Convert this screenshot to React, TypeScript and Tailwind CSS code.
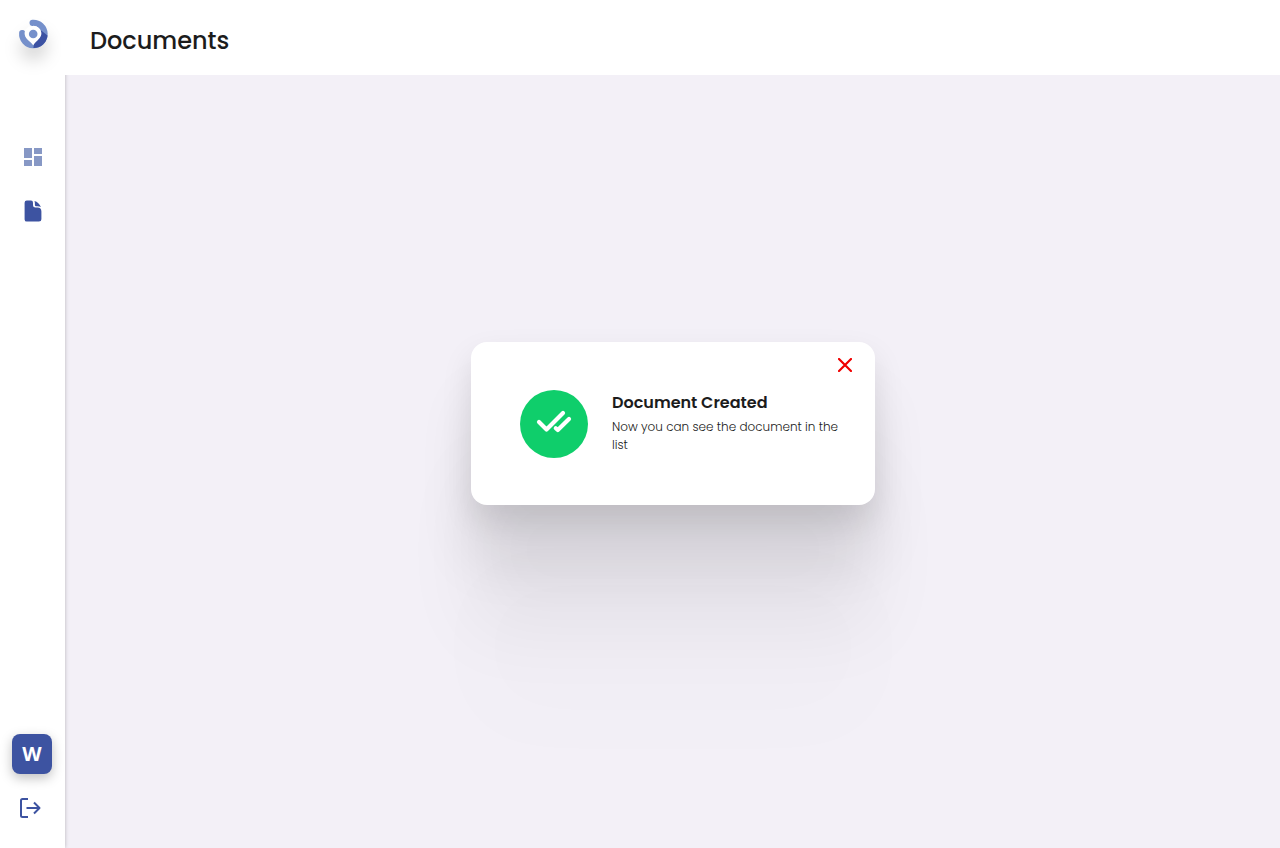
import { MdDashboard } from "react-icons/md";

function Logo() {
  return (
    <svg viewBox="0 0 30 30" className="size-[30px] drop-shadow-[0_12px_8px_rgba(0,0,0,0.15)]" fill="none" aria-hidden="true">
      <path
        d="M14.4 4A11.2 11.2 0 1 1 4 14.2"
        stroke="#7590cb"
        strokeWidth="6.2"
        strokeLinecap="round"
        transform="translate(.2 -.2)"
      />
      <path d="M22.6 11L29.5 16.6Q29 22 24.8 25.8Q20.6 29.2 15.4 29.1L16 24.8Z" fill="#3c52a3" />
      <path d="M15 7.1C10.2 7.1 6.6 10.4 6.6 14.6C6.6 18.9 11.4 22 15.2 26.2C18.6 22 23.4 18.9 23.4 14.6C23.4 10.4 19.8 7.1 15 7.1Z" fill="#fff" />
      <circle cx="15.2" cy="15" r="4.3" fill="#7590cb" />
    </svg>
  );
}

function FileIcon() {
  return (
    <svg viewBox="0 0 18 22" className="h-[22px] w-[18px]" fill="#3d53a1" aria-hidden="true">
      <path d="M2.8.5H7Q9 .5 9 2.8V5.2A2.4 2.4 0 0 0 11.4 7.6H13.5Q17.4 7.8 17.4 11.4V19.2A2.4 2.4 0 0 1 15 21.6H2.8A2.2 2.2 0 0 1 .6 19.4V2.7A2.2 2.2 0 0 1 2.8.5Z" />
      <path d="M10.4.9Q15 2.2 16.9 7Q15.5 6.3 13.5 6.3H12.2Q10.9 6.3 10.9 4.8V3Q10.9 1.8 10.4.9Z" />
    </svg>
  );
}

function LogoutIcon() {
  return (
    <svg viewBox="0 0 22 22" className="size-[22px]" fill="none" stroke="#3d53a1" strokeWidth="2" strokeLinejoin="round" aria-hidden="true">
      <path d="M9 2H3.5Q2 2 2 3.5V18.5Q2 20 3.5 20H9" />
      <path d="M7.5 11H20.5M15 5.5L20.5 11L15 16.5" />
    </svg>
  );
}

function DoubleCheck() {
  return (
    <svg viewBox="0 0 36 24" className="h-6 w-9" fill="none" stroke="#fff" strokeWidth="4.2" strokeLinecap="round" strokeLinejoin="round" aria-hidden="true">
      <path d="M3 12L10.5 19.5L27 3" />
      <path d="M19.8 18.2L21.8 20L33 9" />
    </svg>
  );
}

export default function App() {
  return (
    <div className="flex min-h-screen bg-[#f3f0f7] font-['Poppins','Inter',sans-serif] text-[#1c1c1c]">
      <aside className="flex w-[65px] shrink-0 flex-col items-center bg-white pt-[19px] pb-[29px] pl-px shadow-[0_0_4px_rgba(0,0,0,0.25)]">
        <a href="#home" aria-label="Home" className="block">
          <Logo />
        </a>
        <nav aria-label="Main" className="mt-24 flex flex-col items-center gap-[31px]">
          <a href="#dashboard" aria-label="Dashboard">
            <MdDashboard className="size-6 text-[#8798c5]" />
          </a>
          <a href="#documents" aria-label="Documents" aria-current="page">
            <FileIcon />
          </a>
        </nav>
        <div className="mt-auto flex flex-col items-center gap-[23px] pr-0.5">
          <button
            type="button"
            aria-label="Account"
            className="size-10 rounded-lg bg-[#3d53a1] font-['Open_Sans',sans-serif] text-xl font-bold text-white shadow-[0_4px_12px_rgba(0,0,0,0.25)]"
          >
            W
          </button>
          <button type="button" aria-label="Log out" className="pr-1">
            <LogoutIcon />
          </button>
        </div>
      </aside>

      <div className="relative min-w-0 flex-1">
        <header className="-ml-1 flex h-[75px] items-center bg-white pt-1.5 pl-[29px]">
          <h1 className="text-2xl leading-9 font-medium">Documents</h1>
        </header>

        <main className="absolute inset-0 grid place-items-center pb-px pl-px">
          <section
            role="dialog"
            aria-labelledby="notice-title"
            className="relative flex w-[404px] items-start gap-6 rounded-2xl bg-white pt-12 pr-8 pb-[47px] pl-[49px] shadow-[0_14px_31px_rgba(0,0,0,0.1),0_56px_56px_rgba(0,0,0,0.09),0_126px_76px_rgba(0,0,0,0.05),0_224px_90px_rgba(0,0,0,0.01)]"
          >
            <div className="grid size-[68px] shrink-0 place-items-center rounded-full bg-[#0fce6b] pb-1">
              <DoubleCheck />
            </div>
            <div className="min-w-0">
              <h2 id="notice-title" className="text-base leading-[26px] font-semibold">Document Created</h2>
              <p className="mt-0.5 text-xs leading-[18px] font-light">Now you can see the document in the list</p>
            </div>
            <button type="button" aria-label="Close" className="absolute top-4 right-[23px]">
              <svg viewBox="0 0 14 14" className="size-3.5" fill="none" stroke="#f00000" strokeWidth="2.2" strokeLinecap="round" aria-hidden="true">
                <path d="M1 1L13 13M13 1L1 13" />
              </svg>
            </button>
          </section>
        </main>
      </div>
    </div>
  );
}
